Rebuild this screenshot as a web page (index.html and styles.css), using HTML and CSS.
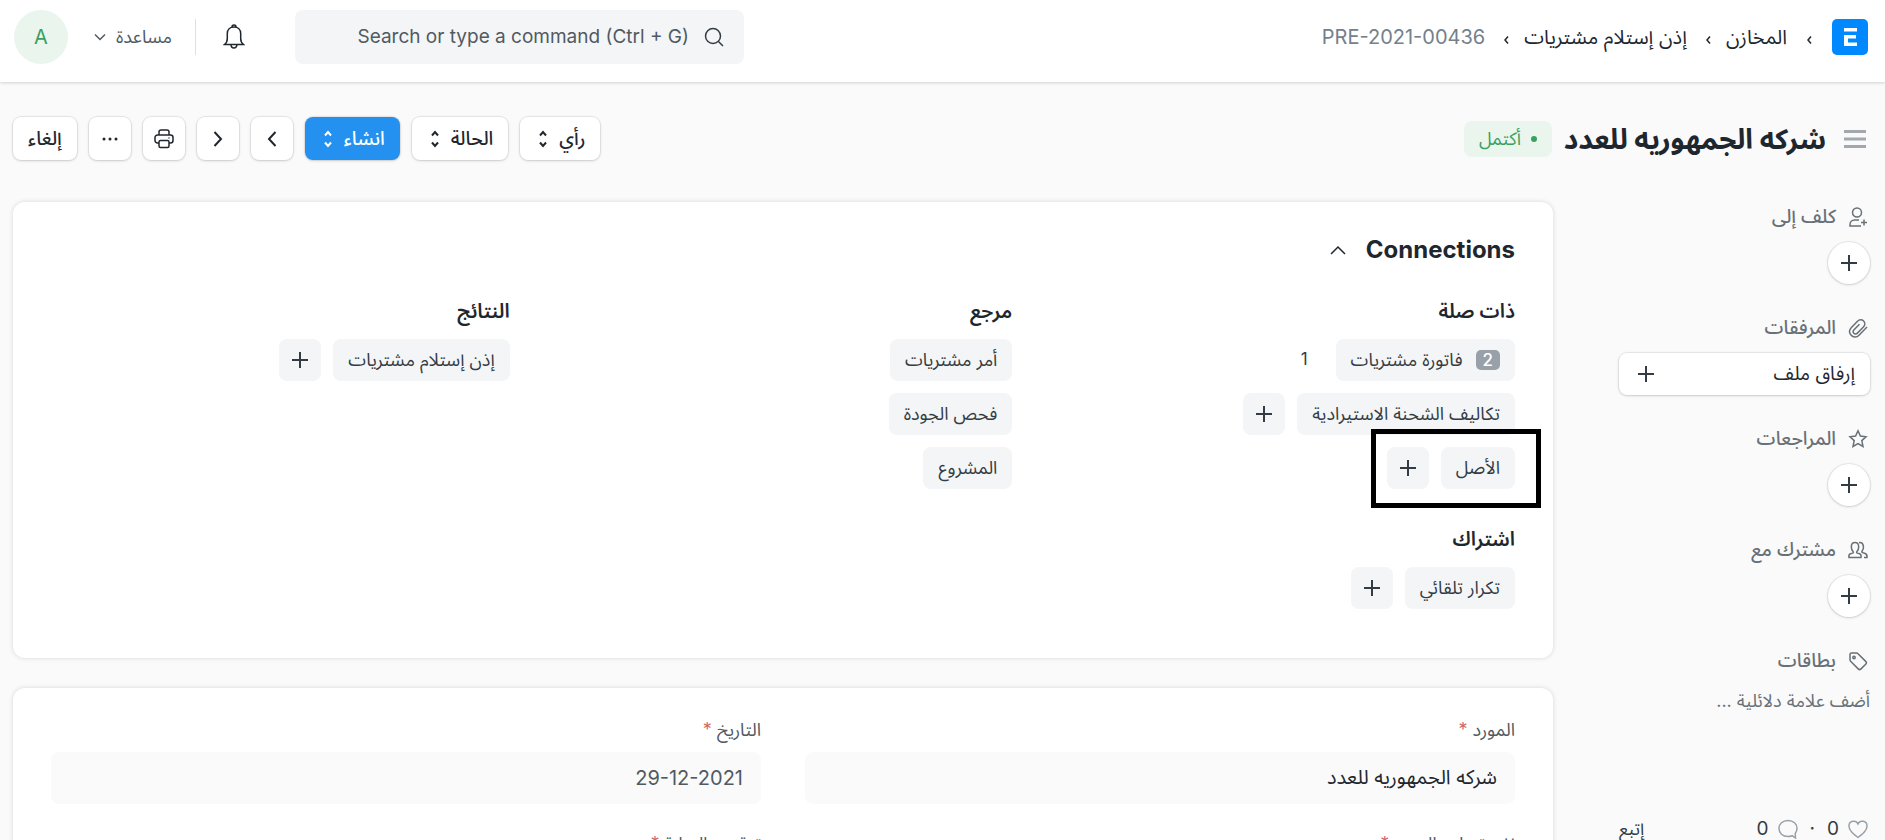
FILE: index.html
```
<!DOCTYPE html>
<html lang="ar" dir="rtl">
<head>
	<meta charset="utf-8">
	<meta name="viewport" content="width=device-width, initial-scale=1">
	<title>شركه الجمهوريه للعدد</title>
	<link rel="stylesheet" href="styles.css">
</head>
<body>
<svg class="sprite" aria-hidden="true">
	<symbol id="plus" viewBox="0 0 16 16"><path d="M8 0v16M0 8h16"/></symbol>
	<symbol id="sep" viewBox="0 0 5 8"><path d="M4 0.5L1 4l3 3.5"/></symbol>
	<symbol id="updown" viewBox="0 0 8 18"><path d="M1 5.5L4 2l3 3.5M1 12.5L4 16l3-3.5"/></symbol>
</svg>

<header class="navbar">
	<a class="logo" href="#" aria-label="ERPNext">
		<svg viewBox="0 0 36 36" width="36" height="36">
			<rect width="36" height="36" rx="5" fill="#0089ff"/>
			<path fill="#fff" d="M12 9h13v3.5H12zM12 16h12v3.5h-8v4h9V27H12z"/>
		</svg>
	</a>
	<nav class="breadcrumbs">
		<svg class="sep"><use href="#sep"/></svg>
		<a href="#">المخازن</a>
		<svg class="sep"><use href="#sep"/></svg>
		<a href="#">إذن إستلام مشتريات</a>
		<svg class="sep"><use href="#sep"/></svg>
		<a class="current" href="#" dir="ltr">PRE-2021-00436</a>
	</nav>
	<label class="search">
		<svg viewBox="0 0 20 20" width="20" height="20"><circle cx="9" cy="9" r="7.5"/><path d="M14.5 14.5L19 19"/></svg>
		<input type="text" dir="ltr" aria-label="Search" placeholder="Search or type a command (Ctrl + G)">
	</label>
	<button class="bell" aria-label="Notifications">
		<svg viewBox="0 0 22 26" width="22" height="26"><path d="M1.5 20.5h19c-2-1.5-2.800-3.500-2.800-6V9.500C17.700 5.500 15 3 11 3S4.300 5.500 4.300 9.500v5c0 2.500-.8 4.500-2.800 6zM9 3a2 2 0 0 1 4 0M8 20.500a3 3.500 0 0 0 6 0"/></svg>
	</button>
	<span class="divider"></span>
	<button class="help">مساعدة
		<svg viewBox="0 0 12 8" width="12" height="8"><path d="M1 1.500l5 5 5-5"/></svg>
	</button>
	<button class="avatar">A</button>
</header>

<div class="page-head">
	<button class="menu" aria-label="Menu">
		<svg viewBox="0 0 24 20" width="24" height="20"><path d="M1 2.500h22M1 10h22M1 17.500h22"/></svg>
	</button>
	<h1>شركه الجمهوريه للعدد</h1>
	<span class="status">أكتمل</span>
	<div class="actions">
		<button class="btn">رأي <svg class="updown"><use href="#updown"/></svg></button>
		<button class="btn">الحالة <svg class="updown"><use href="#updown"/></svg></button>
		<button class="btn primary">انشاء <svg class="updown"><use href="#updown"/></svg></button>
		<button class="btn square" aria-label="Previous"><svg viewBox="0 0 10 16" width="10" height="16"><path d="M8.500 1L2 8l6.500 7"/></svg></button>
		<button class="btn square" aria-label="Next"><svg viewBox="0 0 10 16" width="10" height="16"><path d="M1.500 1L8 8l-6.500 7"/></svg></button>
		<button class="btn square" aria-label="Print">
			<svg class="thin" viewBox="0 0 20 20" width="20" height="20"><path d="M5 6V3a2 2 0 0 1 2-2h6a2 2 0 0 1 2 2v3M5 14H3.500A2.500 2.500 0 0 1 1 11.500v-3A2.500 2.500 0 0 1 3.500 6h13A2.500 2.500 0 0 1 19 8.500v3a2.500 2.500 0 0 1-2.500 2.500H15"/><rect x="5" y="11.500" width="10" height="7" rx="1.500"/><path d="M14.500 9h1"/></svg>
		</button>
		<button class="btn square" aria-label="More"><svg class="dots" viewBox="0 0 16 4" width="16" height="4"><circle cx="2" cy="2" r="1.500"/><circle cx="8" cy="2" r="1.500"/><circle cx="14" cy="2" r="1.500"/></svg></button>
		<button class="btn">إلغاء</button>
	</div>
</div>

<div class="layout">
	<aside class="sidebar">
		<section>
			<h2><svg viewBox="0 0 20 20" width="20" height="20"><circle cx="9" cy="5.500" r="4.500"/><path d="M13 19H2v-1.500c0-2.500 2-4.500 4.500-4.500H11M16 12.500v6M13 15.500h6"/></svg>كلف إلى</h2>
			<button class="round" aria-label="كلف إلى"><svg class="plus"><use href="#plus"/></svg></button>
		</section>
		<section>
			<h2><svg viewBox="0 0 20 20" width="20" height="20"><path d="M19 9l-8 8.200a5.200 5.200 0 0 1-8-.2c-2-2.200-1.800-5 .2-7.200l6.300-6.500c1.800-1.900 4.500-1.900 6.100-.3s1.600 4.200-.2 6l-6 6.100c-1.200 1.200-2.700 1.200-3.600.2s-.9-2.300.2-3.500l5.500-5.600"/></svg>المرفقات</h2>
			<button class="attach">إرفاق ملف <svg class="plus"><use href="#plus"/></svg></button>
		</section>
		<section>
			<h2><svg viewBox="0 0 20 20" width="20" height="20"><path d="M10 1.800l2.400 5.300 5.600.6-4.200 3.900 1.200 5.800-5-2.900-5 2.900 1.200-5.800L2 7.700l5.600-.6z"/></svg>المراجعات</h2>
			<button class="round" aria-label="المراجعات"><svg class="plus"><use href="#plus"/></svg></button>
		</section>
		<section>
			<h2><svg viewBox="0 0 20 20" width="20" height="20"><path d="M1 17.500c-.4-2 .3-3.500 2-3.900l1.800-.5c.7-.2.700-1 .2-1.600C2.800 9 2.200 2.500 7 2.500s4.200 6.500 2 9c-.5.600-.5 1.400.2 1.600l1.800.5c1.700.4 2.400 1.900 2 3.900zM11 2.700c4.500-1 5.500 5 3.200 8.300-.5.700-.3 1.400.4 1.600l2 .6c1.900.5 2.700 1.800 2.400 4.300H16"/></svg>مشترك مع</h2>
			<button class="round" aria-label="مشترك مع"><svg class="plus"><use href="#plus"/></svg></button>
		</section>
		<section class="tags">
			<h2><svg viewBox="0 0 20 20" width="20" height="20"><path d="M2 3.500v5.200c0 .6.200 1.100.6 1.500l7.600 7.700c.8.800 2 .8 2.800 0l4.700-4.700c.8-.8.8-2 0-2.800L10 2.700c-.4-.4-.9-.6-1.400-.6H3.500c-.9 0-1.500.6-1.500 1.400z"/><circle cx="6" cy="6.500" r="1.200"/></svg>بطاقات</h2>
			<a href="#">أضف علامة دلائلية ...</a>
		</section>
		<div class="stats">
			<svg viewBox="0 0 20 20" width="20" height="20"><path d="M10 18.500C5 14.500 1 11.500 1 7a4.700 4.700 0 0 1 9-2 4.700 4.700 0 0 1 9 2c0 4.500-4 7.500-9 11.500z"/></svg>
			<span>0</span>
			<span class="dot">·</span>
			<svg viewBox="0 0 20 20" width="20" height="20"><path d="M17.500 19l-.3-4.500C18.300 13 19 11.500 19 9.500 19 5 15.500 1.500 10 1.500S1 5 1 9.500s3.500 8 9 8c1.500 0 3-.3 4.200-.8z"/></svg>
			<span>0</span>
			<a href="#">إتبع</a>
		</div>
	</aside>

	<main class="content">
		<section class="card connections">
			<button class="collapse">Connections
				<svg viewBox="0 0 16 10" width="16" height="10"><path d="M1 9l7-7 7 7"/></svg>
			</button>
			<div class="columns">
				<div class="group">
					<h3>ذات صلة</h3>
					<div class="line">
						<a class="chip" href="#"><span class="count">2</span>فاتورة مشتريات</a>
						<span class="open">1</span>
					</div>
					<div class="line">
						<a class="chip" href="#">تكاليف الشحنة الاستيرادية</a>
						<button class="add" aria-label="إضافة"><svg class="plus"><use href="#plus"/></svg></button>
					</div>
					<div class="line marked">
						<a class="chip" href="#">الأصل</a>
						<button class="add" aria-label="إضافة"><svg class="plus"><use href="#plus"/></svg></button>
					</div>
				</div>
				<div class="group">
					<h3>مرجع</h3>
					<div class="line"><a class="chip" href="#">أمر مشتريات</a></div>
					<div class="line"><a class="chip" href="#">فحص الجودة</a></div>
					<div class="line"><a class="chip" href="#">المشروع</a></div>
				</div>
				<div class="group">
					<h3>النتائج</h3>
					<div class="line">
						<a class="chip" href="#">إذن إستلام مشتريات</a>
						<button class="add" aria-label="إضافة"><svg class="plus"><use href="#plus"/></svg></button>
					</div>
				</div>
				<div class="group">
					<h3>اشتراك</h3>
					<div class="line">
						<a class="chip" href="#">تكرار تلقائي</a>
						<button class="add" aria-label="إضافة"><svg class="plus"><use href="#plus"/></svg></button>
					</div>
				</div>
			</div>
		</section>

		<form class="card fields">
			<div class="field">
				<label for="supplier">المورد <span class="req">*</span></label>
				<input class="strong" id="supplier" type="text" value="شركه الجمهوريه للعدد" readonly>
			</div>
			<div class="field">
				<label for="date">التاريخ <span class="req">*</span></label>
				<input id="date" type="text" value="29-12-2021" readonly>
			</div>
			<div class="field">
				<label for="note">إذن تسليم المورد <span class="req">*</span></label>
				<input id="note" type="text" readonly>
			</div>
			<div class="field">
				<label for="time">توقيت البداية <span class="req">*</span></label>
				<input id="time" type="text" readonly>
			</div>
		</form>
	</main>
</div>
</body>
</html>
```
FILE: styles.css
```
* {
	box-sizing: border-box;
}
body {
	margin: 0;
	height: 100vh;
	overflow: hidden;
	background: #fafafa;
	color: #1f272e;
	font-family: Inter, "Noto Sans Arabic", sans-serif;
	font-size: 18px;
	line-height: 30px;
}
h1, h2, h3 {
	margin: 0;
}
a {
	color: inherit;
	text-decoration: none;
}
button, input {
	font: inherit;
	color: inherit;
	border: 0;
	padding: 0;
	background: none;
}
button {
	cursor: pointer;
}
svg {
	flex: none;
	fill: none;
	stroke: currentColor;
	stroke-width: 1.5;
}
.sprite {
	display: none;
}
.plus {
	width: 16px;
	height: 16px;
	color: #333c44;
	stroke-width: 2;
}
.updown {
	width: 8px;
	height: 18px;
}

/* navbar */
.navbar {
	display: flex;
	align-items: center;
	padding: 10px 17px 18px 14px;
	background: #fff;
	box-shadow: 0 1px 3px rgba(0, 0, 0, 0.16);
}
.logo svg {
	display: block;
	stroke: none;
}
.breadcrumbs {
	display: flex;
	align-items: center;
	gap: 15px;
	margin-right: 20px;
	font-size: 20px;
}
.sep {
	width: 5px;
	height: 8px;
	margin: 6px 0 0 4px;
}
.breadcrumbs .sep:first-child {
	margin-left: 5px;
}
.current {
	color: #74808b;
}
.search {
	display: flex;
	align-items: center;
	gap: 15px;
	width: 449px;
	height: 54px;
	margin-right: auto;
	padding: 0 20px;
	border-radius: 8px;
	background: #f4f5f6;
	color: #333c44;
}
.search input {
	flex: 1;
	min-width: 0;
	text-align: right;
	font-size: 19px;
}
.search input::placeholder {
	color: #505a62;
	opacity: 1;
}
.bell {
	display: flex;
	margin-right: 50px;
}
.divider {
	width: 1px;
	height: 36px;
	margin: 0 27px 0 23px;
	background: #dce0e3;
}
.help {
	display: flex;
	align-items: center;
	gap: 10px;
	color: #505a62;
}
.avatar {
	width: 54px;
	height: 54px;
	margin-right: 26px;
	border-radius: 50%;
	background: #eaf5ee;
	color: #38a160;
	font-size: 20px;
}

/* title and toolbar */
.page-head {
	display: flex;
	align-items: center;
	padding: 35px 18px 42px 13px;
}
.menu {
	display: flex;
	color: #a3a8ae;
}
.menu svg {
	stroke-width: 3;
}
h1 {
	margin: 0 17px 0 12px;
	font-size: 28px;
	font-weight: 700;
}
.status {
	display: flex;
	align-items: center;
	gap: 10px;
	height: 36px;
	padding: 0 15px;
	border-radius: 8px;
	background: #eaf5ee;
	color: #38a160;
}
.status::before {
	content: "";
	width: 6px;
	height: 6px;
	border-radius: 50%;
	background: #38a160;
}
.actions {
	display: flex;
	gap: 12px;
	margin-right: auto;
}
.btn {
	display: flex;
	align-items: center;
	justify-content: center;
	gap: 12px;
	height: 43px;
	padding: 0 15px;
	border-radius: 8px;
	background: #fff;
	box-shadow: 0 0 1px 1px rgba(0, 0, 0, 0.08), 0 1px 3px rgba(0, 0, 0, 0.12);
	font-size: 19px;
	font-weight: 500;
}
.btn .updown {
	margin-left: 4px;
}
.btn svg {
	stroke-width: 2;
}
.btn .thin {
	stroke-width: 1.5;
}
.btn .dots {
	fill: currentColor;
	stroke: none;
}
.btn.square {
	width: 42px;
	padding: 0;
}
.btn.primary {
	background: #2490ef;
	color: #fff;
}

/* sidebar */
.layout {
	display: flex;
	align-items: flex-start;
	gap: 66px;
	padding: 0 15px 0 13px;
}
.sidebar {
	width: 251px;
	flex: none;
	color: #687178;
}
.sidebar section {
	margin-bottom: 29px;
}
h2 {
	display: flex;
	align-items: center;
	gap: 12px;
	margin: 0 2px 10px 0;
	font-size: 19px;
	font-weight: 500;
}
.round, .attach {
	display: flex;
	align-items: center;
	justify-content: center;
	width: 42px;
	height: 42px;
	border-radius: 50%;
	background: #fff;
	box-shadow: 0 0 1px 1px rgba(0, 0, 0, 0.08), 0 1px 3px rgba(0, 0, 0, 0.12);
}
.attach {
	justify-content: space-between;
	width: 100%;
	padding: 0 15px 0 19px;
	border-radius: 8px;
	color: #1f272e;
	font-size: 19px;
}
.sidebar .tags {
	margin-bottom: 98px;
}
.tags a {
	display: block;
}
.stats {
	display: flex;
	align-items: center;
	gap: 9px;
	padding-right: 2px;
	color: #333c44;
	font-size: 19px;
}
.stats svg {
	color: #98a1a9;
}
.stats .dot {
	margin: 0 3px;
}
.stats a {
	margin-right: auto;
	font-size: 18px;
}

/* cards */
.content {
	flex: 1;
	min-width: 0;
}
.card {
	margin-bottom: 30px;
	border-radius: 12px;
	background: #fff;
	box-shadow: 0 0 5px rgba(0, 0, 0, 0.14);
}
.connections {
	padding: 30px 38px 49px;
}
.collapse {
	display: flex;
	align-items: center;
	gap: 20px;
	margin-bottom: 28px;
	font-size: 24px;
	font-weight: 700;
	line-height: 36px;
}
.columns {
	display: grid;
	grid-template-columns: repeat(3, 1fr);
	gap: 35px 44px;
}
h3 {
	margin-bottom: 13px;
	font-size: 20px;
	font-weight: 600;
}
.line {
	display: flex;
	gap: 12px;
	width: fit-content;
}
.line + .line {
	margin-top: 12px;
}
.chip, .add {
	display: flex;
	align-items: center;
	justify-content: center;
	height: 42px;
	padding: 0 15px;
	border-radius: 8px;
	background: #f4f5f6;
	color: #333c44;
}
.add {
	width: 42px;
	padding: 0;
}
.count {
	margin-left: 13px;
	padding: 0 7px;
	border-radius: 5px;
	background: #98a1a9;
	color: #fff;
	font-size: 17px;
	font-weight: 500;
	line-height: 20px;
}
.open {
	margin: 5px 16px;
	color: #333c44;
	font-size: 17px;
}
.marked {
	position: relative;
}
.marked::after {
	content: "";
	position: absolute;
	top: -18px;
	right: -26px;
	bottom: -19px;
	left: -16px;
	border: 5px solid #000;
	pointer-events: none;
}

/* form */
.fields {
	display: grid;
	grid-template-columns: 1fr 1fr;
	gap: 25px 44px;
	padding: 27px 38px;
}
.field label {
	display: block;
	margin-bottom: 7px;
	color: #505a62;
}
.req {
	color: #d0696d;
}
.field input {
	display: block;
	width: 100%;
	height: 52px;
	padding: 0 18px;
	border-radius: 8px;
	background: #fafafa;
	color: #505a62;
	font-size: 20px;
}
.field .strong {
	color: #1f272e;
}
```
